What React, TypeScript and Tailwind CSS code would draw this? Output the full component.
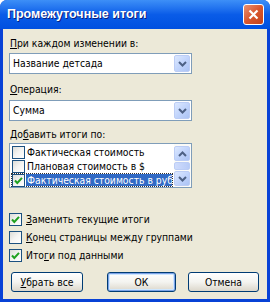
import type { ReactNode } from "react";

const uiFont = "font-['DejaVu_Sans_Condensed','Liberation_Sans',sans-serif] text-[10.3px] leading-[13px] text-black";

function Chevron({ up = false }: { up?: boolean }) {
  return (
    <svg width="9" height="6" viewBox="0 0 9 6" className="block">
      <polyline
        points={up ? "1,5 4.5,1.5 8,5" : "1,1 4.5,4.5 8,1"}
        fill="none"
        stroke="#4d6185"
        strokeWidth="2"
      />
    </svg>
  );
}

function ArrowButton({ up = false, className = "" }: { up?: boolean; className?: string }) {
  return (
    <div
      className={`flex items-center justify-center rounded-[2px] border border-[#bccdf5] bg-gradient-to-br from-[#dce8fe] via-[#c2d5fc] to-[#abc3f4] ${className}`}
    >
      <Chevron up={up} />
    </div>
  );
}

function Combo({ value }: { value: string }) {
  return (
    <div className="flex h-[21px] w-[183px] items-center border border-[#7f9db9] bg-white pl-[3px] pr-[1px]">
      <span className="flex-1 whitespace-nowrap">{value}</span>
      <ArrowButton className="h-[17px] w-[16px]" />
    </div>
  );
}

function Check({ checked = false }: { checked?: boolean }) {
  return (
    <div className="flex h-[13px] w-[13px] shrink-0 items-center justify-center border border-[#1c5180] bg-gradient-to-br from-[#dcdcd7] via-[#f4f4f2] to-white">
      {checked && (
        <svg width="9" height="9" viewBox="0 0 9 9" className="block">
          <polyline points="1,4.5 3.3,7 8,1.8" fill="none" stroke="#21a121" strokeWidth="2" />
        </svg>
      )}
    </div>
  );
}

function ListRow({ label, checked = false, selected = false }: { label: string; checked?: boolean; selected?: boolean }) {
  return (
    <div
      className={`mx-[1px] flex h-[14px] items-center border ${selected ? "border-dotted border-[#333]" : "border-transparent"}`}
    >
      <Check checked={checked} />
      <span
        className={`ml-[1px] flex h-full flex-1 items-center overflow-hidden whitespace-nowrap pl-[1px] ${selected ? "bg-[#316ac5] text-white" : ""}`}
      >
        {label}
      </span>
    </div>
  );
}

function OptionRow({ children, checked = false }: { children: ReactNode; checked?: boolean }) {
  return (
    <div className="flex items-center gap-[4px]">
      <Check checked={checked} />
      <span>{children}</span>
    </div>
  );
}

function Button({ children, primary = false, width }: { children: ReactNode; primary?: boolean; width: string }) {
  return (
    <button
      className={`flex h-[20px] items-center justify-center rounded-[3px] border border-[#003c74] bg-gradient-to-b from-white via-[#f4f4f0] to-[#dcd7cb] ${width} ${
        primary ? "shadow-[inset_0_0_0_1px_#7ba2e7,inset_0_0_0_2px_#cee7ff]" : ""
      }`}
    >
      {children}
    </button>
  );
}

export default function App() {
  return (
    <div className={`h-[302px] w-[270px] bg-white ${uiFont}`}>
      <div className="flex h-full flex-col rounded-t-[7px] bg-[#0842d6]">
        <div className="flex h-[29px] items-center justify-between rounded-t-[7px] bg-gradient-to-b from-[#3d8ff7] via-[#0a5ce8] to-[#0050e0] pl-[7px] pr-[6px]">
          <span className="font-['Liberation_Sans',sans-serif] text-[12.5px] font-bold text-white [text-shadow:1px_1px_0_#0a1f80]">
            Промежуточные итоги
          </span>
          <div className="flex h-[21px] w-[21px] items-center justify-center rounded-[3px] border border-white bg-gradient-to-br from-[#e8906f] via-[#d9562d] to-[#c4421a]">
            <svg width="11" height="11" viewBox="0 0 11 11" className="block">
              <path d="M1.5 1.5 L9.5 9.5 M9.5 1.5 L1.5 9.5" stroke="white" strokeWidth="2.2" />
            </svg>
          </div>
        </div>

        <div className="mx-[3px] mb-[3px] flex flex-1 flex-col bg-[#ece9d8] pl-[6px] pt-[8px]">
          <span className="ml-[1px]">
            <u>П</u>ри каждом изменении в:
          </span>
          <div className="mt-[3px]">
            <Combo value="Название детсада" />
          </div>

          <span className="ml-[1px] mt-[9px]">
            <u>О</u>перация:
          </span>
          <div className="mt-[4px]">
            <Combo value="Сумма" />
          </div>

          <span className="ml-[1px] mt-[7px]">
            До<u>б</u>авить итоги по:
          </span>
          <div className="mt-[2px] flex h-[45px] w-[183px] border border-[#7f9db9] bg-white">
            <div className="flex min-w-0 flex-1 flex-col pt-[1px]">
              <ListRow label="Фактическая стоимость" />
              <ListRow label="Плановая стоимость в $" />
              <ListRow label="Фактическая стоимость в рублях" checked selected />
            </div>
            <div className="flex w-[17px] flex-col bg-[#fbfbf8] pr-[1px] pt-[2px]">
              <ArrowButton up className="h-[15px] w-full" />
              <div className="mt-[1px] h-[8px] w-full rounded-[2px] border border-[#bccdf5] bg-gradient-to-r from-[#cfdcfc] to-[#b8cbf7]" />
              <ArrowButton className="mt-[1px] h-[15px] w-full" />
            </div>
          </div>

          <div className="mt-[25px] flex flex-col gap-[5px]">
            <OptionRow checked>
              <u>З</u>аменить текущие итоги
            </OptionRow>
            <OptionRow>
              <u>К</u>онец страницы между группами
            </OptionRow>
            <OptionRow checked>
              Ито<u>г</u>и под данными
            </OptionRow>
          </div>

          <div className="mt-[10px] flex items-center">
            <Button width="ml-[2px] w-[72px]">
              <u>У</u>брать все
            </Button>
            <Button primary width="ml-[24px] w-[69px]">
              ОК
            </Button>
            <Button width="ml-[12px] w-[71px]">Отмена</Button>
          </div>
        </div>
      </div>
    </div>
  );
}
